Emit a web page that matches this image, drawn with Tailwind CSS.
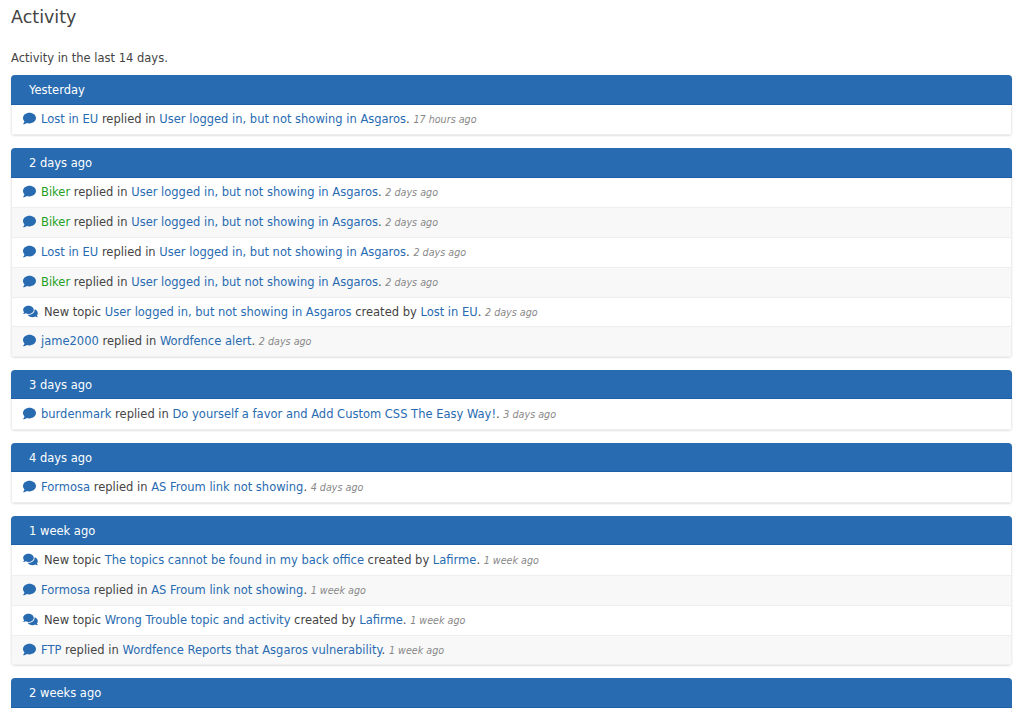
<!doctype html>
<html>
<head>
  <meta charset="UTF-8">
  <title>Activity</title>
  <script src="https://cdn.jsdelivr.net/npm/@tailwindcss/browser@4"></script>
</head>
<body class="bg-white text-[#444444] text-[11.5px] font-['DejaVu_Sans',sans-serif] overflow-hidden h-[712px]">
<svg class="hidden">
  <symbol id="comment" viewBox="0 0 512 512"><path fill="currentColor" d="M256 32C114.6 32 0 125.1 0 240c0 49.6 21.4 95 57 130.700C44.500 421.100 2.700 466 2.200 466.500c-2.200 2.300-2.800 5.700-1.500 8.700S4.800 480 8 480c66.300 0 116-31.800 140.600-51.400 32.700 12.300 69 19.400 107.400 19.400 141.400 0 256-93.100 256-208S397.400 32 256 32z"/></symbol>
  <symbol id="comments" viewBox="0 0 576 512"><path fill="currentColor" d="M416 192c0-88.400-93.100-160-208-160S0 103.600 0 192c0 34.300 14.100 65.900 38 92-13.400 30.200-35.500 54.200-35.800 54.500-2.200 2.300-2.800 5.700-1.500 8.700S4.800 352 8 352c36.600 0 66.900-12.300 88.700-25 32.200 15.700 70.300 25 111.300 25 114.900 0 208-71.600 208-160zm122 220c23.900-26 38-57.700 38-92 0-66.900-53.500-124.200-129.300-148.100.9 6.600 1.300 13.300 1.300 20.100 0 105.900-107.700 192-240 192-10.800 0-21.300-.8-31.700-1.900C207.800 439.600 281.800 480 368 480c41 0 79.100-9.200 111.300-25 21.800 12.700 52.100 25 88.700 25 3.200 0 6.100-1.900 7.300-4.800 1.300-2.900.7-6.300-1.500-8.700-.3-.3-22.400-24.200-35.800-54.500z"/></symbol>
</svg>

<div class="pl-[11px] pr-[12px]">
  <h1 class="text-[17.5px] leading-[20px] pt-[7px] text-[#444444]">Activity</h1>
  <p class="mt-[22px] leading-[18px] mb-[8.3px]">Activity in the last 14 days.</p>

  <section class="mb-[13px] rounded-[4px] shadow-[0_1px_2px_rgba(0,0,0,0.12)] border-x border-b border-[#eeeeee]">
    <h2 class="-mx-px h-[29.250px] leading-[30px] pl-[18px] bg-[#286bb1] text-white rounded-t-[4px] border-b border-[#1f5fa8]">Yesterday</h2>
    <div class="h-[29.750px] pt-[0.6px] flex items-center pl-[11px] bg-white">
      <svg class="w-[13px] h-[13px] mr-[5px] mb-[2px] text-[#286bb1]"><use href="#comment"/></svg>
      <span><a class="text-[#286bb1]">Lost in EU</a> replied in <a class="text-[#286bb1]">User logged in, but not showing in Asgaros</a>. <em class="text-[9.6px] text-[#888888]">17 hours ago</em></span>
    </div>
  </section>

  <section class="mb-[13px] rounded-[4px] shadow-[0_1px_2px_rgba(0,0,0,0.12)] border-x border-b border-[#eeeeee]">
    <h2 class="-mx-px h-[29.250px] leading-[30px] pl-[18px] bg-[#286bb1] text-white rounded-t-[4px] border-b border-[#1f5fa8]">2 days ago</h2>
    <div class="h-[29.750px] pt-[0.6px] flex items-center pl-[11px] bg-white">
      <svg class="w-[13px] h-[13px] mr-[5px] mb-[2px] text-[#286bb1]"><use href="#comment"/></svg>
      <span><a class="text-[#1fa01f]">Biker</a> replied in <a class="text-[#286bb1]">User logged in, but not showing in Asgaros</a>. <em class="text-[9.6px] text-[#888888]">2 days ago</em></span>
    </div>
    <div class="h-[29.750px] pt-[0.6px] flex items-center pl-[11px] bg-[#f8f8f8] border-t border-[#eeeeee]">
      <svg class="w-[13px] h-[13px] mr-[5px] mb-[2px] text-[#286bb1]"><use href="#comment"/></svg>
      <span><a class="text-[#1fa01f]">Biker</a> replied in <a class="text-[#286bb1]">User logged in, but not showing in Asgaros</a>. <em class="text-[9.6px] text-[#888888]">2 days ago</em></span>
    </div>
    <div class="h-[29.750px] pt-[0.6px] flex items-center pl-[11px] bg-white border-t border-[#eeeeee]">
      <svg class="w-[13px] h-[13px] mr-[5px] mb-[2px] text-[#286bb1]"><use href="#comment"/></svg>
      <span><a class="text-[#286bb1]">Lost in EU</a> replied in <a class="text-[#286bb1]">User logged in, but not showing in Asgaros</a>. <em class="text-[9.6px] text-[#888888]">2 days ago</em></span>
    </div>
    <div class="h-[29.750px] pt-[0.6px] flex items-center pl-[11px] bg-[#f8f8f8] border-t border-[#eeeeee]">
      <svg class="w-[13px] h-[13px] mr-[5px] mb-[2px] text-[#286bb1]"><use href="#comment"/></svg>
      <span><a class="text-[#1fa01f]">Biker</a> replied in <a class="text-[#286bb1]">User logged in, but not showing in Asgaros</a>. <em class="text-[9.6px] text-[#888888]">2 days ago</em></span>
    </div>
    <div class="h-[29.750px] pt-[0.6px] flex items-center pl-[11px] bg-white border-t border-[#eeeeee]">
      <svg class="w-[15px] h-[13px] mr-[6px] mb-[2px] text-[#286bb1]"><use href="#comments"/></svg>
      <span>New topic <a class="text-[#286bb1]">User logged in, but not showing in Asgaros</a> created by <a class="text-[#286bb1]">Lost in EU</a>. <em class="text-[9.6px] text-[#888888]">2 days ago</em></span>
    </div>
    <div class="h-[29.750px] pt-[0.6px] flex items-center pl-[11px] bg-[#f8f8f8] border-t border-[#eeeeee]">
      <svg class="w-[13px] h-[13px] mr-[5px] mb-[2px] text-[#286bb1]"><use href="#comment"/></svg>
      <span><a class="text-[#286bb1]">jame2000</a> replied in <a class="text-[#286bb1]">Wordfence alert</a>. <em class="text-[9.6px] text-[#888888]">2 days ago</em></span>
    </div>
  </section>

  <section class="mb-[13px] rounded-[4px] shadow-[0_1px_2px_rgba(0,0,0,0.12)] border-x border-b border-[#eeeeee]">
    <h2 class="-mx-px h-[29.250px] leading-[30px] pl-[18px] bg-[#286bb1] text-white rounded-t-[4px] border-b border-[#1f5fa8]">3 days ago</h2>
    <div class="h-[29.750px] pt-[0.6px] flex items-center pl-[11px] bg-white">
      <svg class="w-[13px] h-[13px] mr-[5px] mb-[2px] text-[#286bb1]"><use href="#comment"/></svg>
      <span><a class="text-[#286bb1]">burdenmark</a> replied in <a class="text-[#286bb1]">Do yourself a favor and Add Custom CSS The Easy Way!</a>. <em class="text-[9.6px] text-[#888888]">3 days ago</em></span>
    </div>
  </section>

  <section class="mb-[13px] rounded-[4px] shadow-[0_1px_2px_rgba(0,0,0,0.12)] border-x border-b border-[#eeeeee]">
    <h2 class="-mx-px h-[29.250px] leading-[30px] pl-[18px] bg-[#286bb1] text-white rounded-t-[4px] border-b border-[#1f5fa8]">4 days ago</h2>
    <div class="h-[29.750px] pt-[0.6px] flex items-center pl-[11px] bg-white">
      <svg class="w-[13px] h-[13px] mr-[5px] mb-[2px] text-[#286bb1]"><use href="#comment"/></svg>
      <span><a class="text-[#286bb1]">Formosa</a> replied in <a class="text-[#286bb1]">AS Froum link not showing</a>. <em class="text-[9.6px] text-[#888888]">4 days ago</em></span>
    </div>
  </section>

  <section class="mb-[13px] rounded-[4px] shadow-[0_1px_2px_rgba(0,0,0,0.12)] border-x border-b border-[#eeeeee]">
    <h2 class="-mx-px h-[29.250px] leading-[30px] pl-[18px] bg-[#286bb1] text-white rounded-t-[4px] border-b border-[#1f5fa8]">1 week ago</h2>
    <div class="h-[29.750px] pt-[0.6px] flex items-center pl-[11px] bg-white">
      <svg class="w-[15px] h-[13px] mr-[6px] mb-[2px] text-[#286bb1]"><use href="#comments"/></svg>
      <span>New topic <a class="text-[#286bb1]">The topics cannot be found in my back office</a> created by <a class="text-[#286bb1]">Lafirme</a>. <em class="text-[9.6px] text-[#888888]">1 week ago</em></span>
    </div>
    <div class="h-[29.750px] pt-[0.6px] flex items-center pl-[11px] bg-[#f8f8f8] border-t border-[#eeeeee]">
      <svg class="w-[13px] h-[13px] mr-[5px] mb-[2px] text-[#286bb1]"><use href="#comment"/></svg>
      <span><a class="text-[#286bb1]">Formosa</a> replied in <a class="text-[#286bb1]">AS Froum link not showing</a>. <em class="text-[9.6px] text-[#888888]">1 week ago</em></span>
    </div>
    <div class="h-[29.750px] pt-[0.6px] flex items-center pl-[11px] bg-white border-t border-[#eeeeee]">
      <svg class="w-[15px] h-[13px] mr-[6px] mb-[2px] text-[#286bb1]"><use href="#comments"/></svg>
      <span>New topic <a class="text-[#286bb1]">Wrong Trouble topic and activity</a> created by <a class="text-[#286bb1]">Lafirme</a>. <em class="text-[9.6px] text-[#888888]">1 week ago</em></span>
    </div>
    <div class="h-[29.750px] pt-[0.6px] flex items-center pl-[11px] bg-[#f8f8f8] border-t border-[#eeeeee]">
      <svg class="w-[13px] h-[13px] mr-[5px] mb-[2px] text-[#286bb1]"><use href="#comment"/></svg>
      <span><a class="text-[#286bb1]">FTP</a> replied in <a class="text-[#286bb1]">Wordfence Reports that Asgaros vulnerability</a>. <em class="text-[9.6px] text-[#888888]">1 week ago</em></span>
    </div>
  </section>

  <section class="rounded-t-[4px] border-x border-[#eeeeee]">
    <h2 class="-mx-px h-[29.250px] leading-[30px] pl-[18px] bg-[#286bb1] text-white rounded-t-[4px] border-b border-[#1f5fa8]">2 weeks ago</h2>
    <div class="h-[4px] bg-white"></div>
  </section>
</div>
</body>
</html>
